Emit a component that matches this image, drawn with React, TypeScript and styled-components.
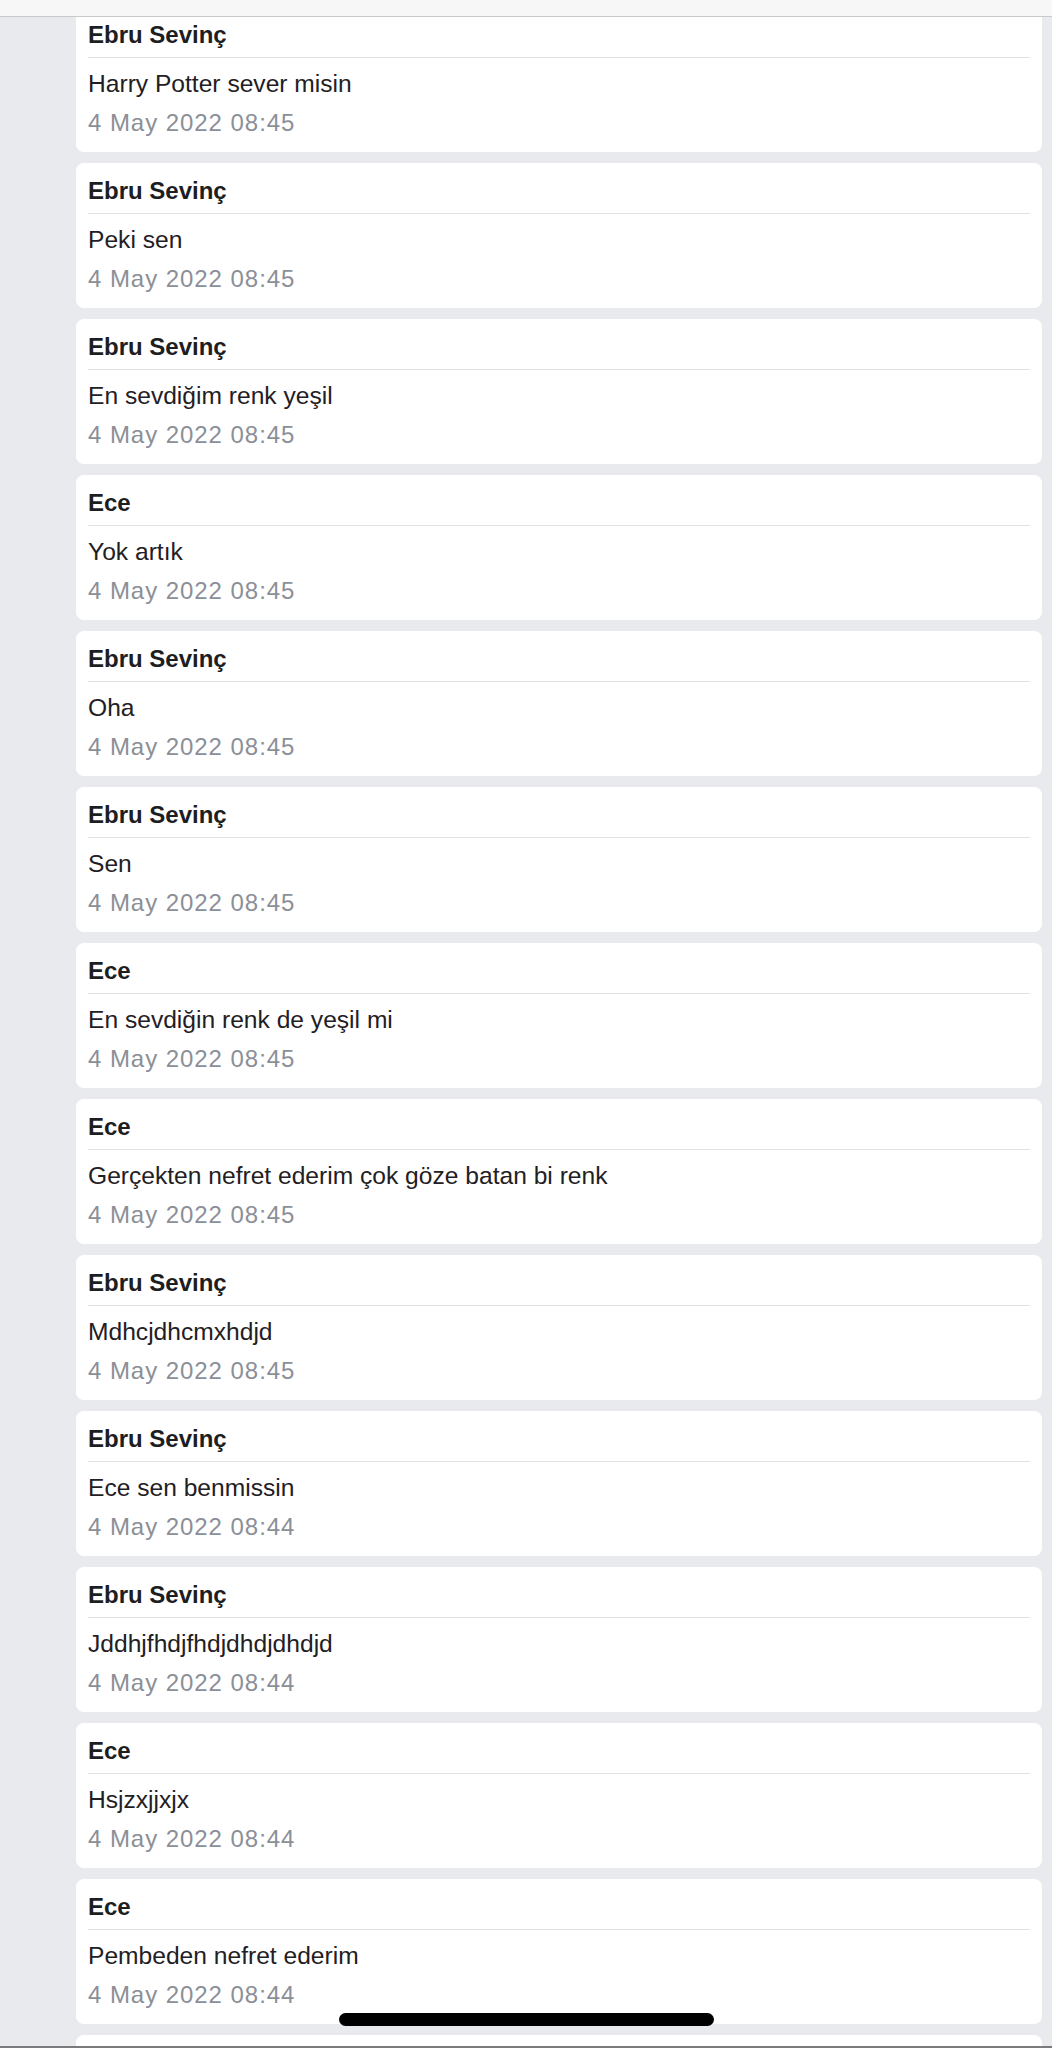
import React from "react";
import styled, { createGlobalStyle } from "styled-components";

const GlobalStyle = createGlobalStyle`
  html, body {
    margin: 0;
    padding: 0;
    background: #e9eaee;
    font-family: "Liberation Sans", Arial, sans-serif;
  }
`;

const TopBar = styled.div`
  position: fixed;
  top: 0;
  left: 0;
  right: 0;
  height: 16px;
  background: #f7f7f7;
  border-bottom: 1px solid #c9c9cb;
  z-index: 5;
`;

const List = styled.div`
  display: flex;
  flex-direction: column;
  gap: 11px;
  padding: 7px 10px 0 76px;
`;

const Card = styled.div`
  background: #ffffff;
  border-radius: 8px;
  padding: 13px 12px 10px;
  height: 145px;
  box-sizing: border-box;
`;

const Name = styled.div`
  font-size: 24px;
  line-height: 30px;
  font-weight: 700;
  color: #1d1e21;
  padding-bottom: 7px;
  border-bottom: 1px solid #e2e3e6;
`;

const Message = styled.div`
  margin-top: 6px;
  font-size: 24.6px;
  line-height: 39px;
  color: #1f2023;
`;

const DateText = styled.div`
  font-size: 24px;
  line-height: 39px;
  color: #8b8f97;
  letter-spacing: 0.95px;
`;

const HomeIndicator = styled.div`
  position: fixed;
  left: 339px;
  bottom: 22px;
  width: 375px;
  height: 13px;
  border-radius: 7px;
  background: #000000;
  z-index: 6;
`;

const BottomEdge = styled.div`
  position: fixed;
  left: 0;
  right: 0;
  bottom: 0;
  height: 2px;
  background: #7b7b7d;
  z-index: 6;
`;

const messages: { name: string; text: string; date: string }[] = [
  { name: "Ebru Sevinç", text: "Harry Potter sever misin", date: "4 May 2022 08:45" },
  { name: "Ebru Sevinç", text: "Peki sen", date: "4 May 2022 08:45" },
  { name: "Ebru Sevinç", text: "En sevdiğim renk yeşil", date: "4 May 2022 08:45" },
  { name: "Ece", text: "Yok artık", date: "4 May 2022 08:45" },
  { name: "Ebru Sevinç", text: "Oha", date: "4 May 2022 08:45" },
  { name: "Ebru Sevinç", text: "Sen", date: "4 May 2022 08:45" },
  { name: "Ece", text: "En sevdiğin renk de yeşil mi", date: "4 May 2022 08:45" },
  { name: "Ece", text: "Gerçekten nefret ederim çok göze batan bi renk", date: "4 May 2022 08:45" },
  { name: "Ebru Sevinç", text: "Mdhcjdhcmxhdjd", date: "4 May 2022 08:45" },
  { name: "Ebru Sevinç", text: "Ece sen benmissin", date: "4 May 2022 08:44" },
  { name: "Ebru Sevinç", text: "Jddhjfhdjfhdjdhdjdhdjd", date: "4 May 2022 08:44" },
  { name: "Ece", text: "Hsjzxjjxjx", date: "4 May 2022 08:44" },
  { name: "Ece", text: "Pembeden nefret ederim", date: "4 May 2022 08:44" },
];

export default function App() {
  return (
    <>
      <GlobalStyle />
      <TopBar />
      <List>
        {messages.map((m, i) => (
          <Card key={i}>
            <Name>{m.name}</Name>
            <Message>{m.text}</Message>
            <DateText>{m.date}</DateText>
          </Card>
        ))}
        <Card />
      </List>
      <HomeIndicator />
      <BottomEdge />
    </>
  );
}
